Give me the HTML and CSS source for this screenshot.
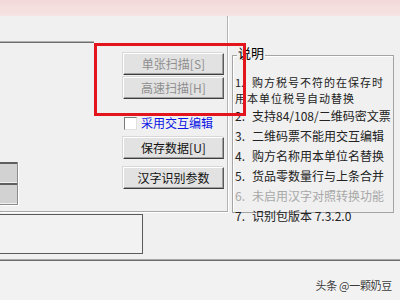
FILE: index.html
```html
<!DOCTYPE html>
<html lang="zh-CN">
<head>
<meta charset="utf-8">
<title>说明</title>
<link rel="stylesheet" href="styles.css">
</head>
<body>
<div class="band"></div>
<div class="work">
  <div class="leftpanel">
    <div class="tabline"></div>
    <div class="row">
      <div class="leftcol">
        <div class="inputs">
          <div class="field"></div>
          <div class="field"></div>
        </div>
      </div>
      <div class="btncol">
        <div class="btn disabled">单张扫描[S]</div>
        <div class="btn disabled second">高速扫描[H]</div>
        <div class="check"><span class="box"></span><span class="label">采用交互编辑</span></div>
        <div class="btn">保存数据[U]</div>
        <div class="btn last">汉字识别参数</div>
      </div>
    </div>
  </div>
  <div class="group">
    <div class="title">说明</div>
    <div class="list">
      <div class="item first"><span class="num">1.</span>购方税号不符的在保存时<br>用本单位税号自动替换</div>
      <div class="item"><span class="num">2.</span>支持84/108/二维码密文票</div>
      <div class="item"><span class="num">3.</span>二维码票不能用交互编辑</div>
      <div class="item"><span class="num">4.</span>购方名称用本单位名替换</div>
      <div class="item"><span class="num">5.</span>货品零数量行与上条合并</div>
      <div class="item dim"><span class="num">6.</span>未启用汉字对照转换功能</div>
      <div class="item"><span class="num">7.</span>识别包版本 7.3.2.0</div>
    </div>
  </div>
</div>
<div class="bottom">
  <div class="editbox"></div>
</div>
<div class="footer">
  <span class="mark">头条 @一颗奶豆</span>
</div>
<div class="redbox"></div>
</body>
</html>
```

FILE: styles.css
```css
html, body {
  margin: 0;
  padding: 0;
}
body {
  width: 400px;
  height: 300px;
  overflow: hidden;
  position: relative;
  background: #f0f0f0;
  font-family: "Noto Sans CJK SC", "Liberation Sans", sans-serif;
  font-size: 12px;
  color: #1a1a1a;
}
.band {
  height: 16px;
  background: linear-gradient(#f3d9d9, #f6e3e3);
}
.work {
  display: flex;
  height: 197px;
}
.leftpanel {
  width: 227px;
  height: 195px;
  border-right: 1px solid #b4b4b4;
  border-bottom: 1px solid #a8a8a8;
  box-shadow: 1px 1px 0 #ffffff;
}
.tabline {
  margin-top: 25px;
  width: 94px;
  height: 0;
  border-top: 1px solid #b0b0b0;
  border-bottom: 1px solid #6e6e6e;
}
.row {
  display: flex;
}
.leftcol {
  width: 123px;
}
.inputs {
  margin-top: 119px;
  width: 17px;
  border-right: 1px solid #8c8c8c;
  border-bottom: 1px solid #8c8c8c;
  box-shadow: 1px 1px 0 #ffffff;
}
.field {
  height: 18px;
  margin-bottom: 1px;
  background: #d2d2d2;
  border-top: 2px solid #5e5e5e;
}
.btncol {
  width: 101px;
  padding-top: 10px;
}
.btn {
  box-sizing: border-box;
  height: 22px;
  line-height: 20px;
  text-align: center;
  background: #e2e2e2;
  border-top: 1px solid #ffffff;
  border-left: 1px solid #ffffff;
  border-right: 1px solid #5a5a5a;
  border-bottom: 1px solid #3c3c3c;
  box-shadow: inset -1px -1px 0 #a0a0a0, -1px -1px 0 #d8d8d8;
  color: #111;
  margin-bottom: 8px;
}
.btn.disabled {
  color: #8e8e8e;
  margin-bottom: 2px;
}
.btn.second {
  margin-bottom: 17px;
}
.check {
  display: flex;
  align-items: center;
  height: 14px;
  margin-bottom: 7px;
}
.box {
  box-sizing: border-box;
  width: 13px;
  height: 13px;
  margin-left: 1px;
  background: #ffffff;
  border: 1px solid #7a7a7a;
  border-right-color: #e0e0e0;
  border-bottom-color: #e0e0e0;
}
.label {
  margin-left: 4px;
  color: #0a14e6;
  line-height: 14px;
  white-space: nowrap;
}
.group {
  box-sizing: border-box;
  margin-left: 4px;
  margin-top: 39px;
  width: 162px;
  height: 158px;
  border: 1px solid #a4a4a4;
  box-shadow: inset 1px 1px 0 #ffffff;
}
.title {
  display: inline-block;
  margin-top: -10px;
  margin-left: 4px;
  padding: 0 1px;
  background: #f0f0f0;
  font-size: 13px;
  line-height: 14px;
  color: #000;
  vertical-align: top;
}
.list {
  margin-top: 1px;
  padding-left: 2px;
  width: 156px;
}
.item {
  line-height: 20px;
  height: 20px;
  white-space: nowrap;
  color: #222;
}
.item.first {
  font-size: 11px;
  letter-spacing: 1px;
  line-height: 16px;
  height: 32px;
}
.item.first .num {
  letter-spacing: 0;
}
.item.dim {
  color: #a8a8a8;
}
.num {
  display: inline-block;
  width: 17px;
}
.bottom {
  height: 45px;
  border-bottom: 1px solid #a8a8a8;
}
.editbox {
  box-sizing: border-box;
  margin-top: 1px;
  margin-left: -1px;
  width: 144px;
  height: 40px;
  border: 1px solid #5a5a5a;
  background: #f2f2f2;
}
.footer {
  height: 42px;
  border-top: 1px solid #6e6e6e;
  background: #f2f2f2;
  display: flex;
  justify-content: flex-end;
  align-items: flex-start;
  padding-right: 8px;
}
.mark {
  margin-top: 18px;
  font-size: 11px;
  line-height: 13px;
  letter-spacing: -0.3px;
  color: #3a3a3a;
  text-shadow: 0 0 2px #ffffff;
}
.redbox {
  position: absolute;
  left: 94px;
  top: 43px;
  width: 146px;
  height: 67px;
  border: 3px solid #e3141c;
}
```
